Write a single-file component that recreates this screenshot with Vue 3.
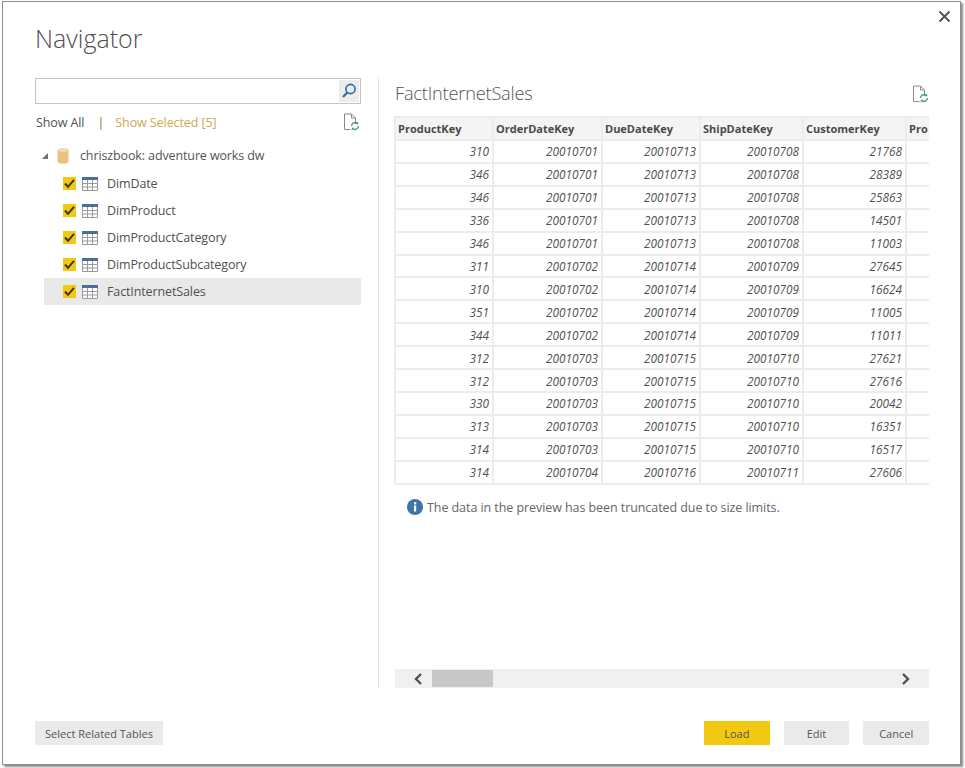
<script setup>
const tables = ['DimDate', 'DimProduct', 'DimProductCategory', 'DimProductSubcategory', 'FactInternetSales']
const columns = [
  { name: 'ProductKey', width: 98 },
  { name: 'OrderDateKey', width: 109 },
  { name: 'DueDateKey', width: 98 },
  { name: 'ShipDateKey', width: 103 },
  { name: 'CustomerKey', width: 103 },
  { name: 'Pro', width: 24 },
]
const rows = [
  [310, 20010701, 20010713, 20010708, 21768],
  [346, 20010701, 20010713, 20010708, 28389],
  [346, 20010701, 20010713, 20010708, 25863],
  [336, 20010701, 20010713, 20010708, 14501],
  [346, 20010701, 20010713, 20010708, 11003],
  [311, 20010702, 20010714, 20010709, 27645],
  [310, 20010702, 20010714, 20010709, 16624],
  [351, 20010702, 20010714, 20010709, 11005],
  [344, 20010702, 20010714, 20010709, 11011],
  [312, 20010703, 20010715, 20010710, 27621],
  [312, 20010703, 20010715, 20010710, 27616],
  [330, 20010703, 20010715, 20010710, 20042],
  [313, 20010703, 20010715, 20010710, 16351],
  [314, 20010703, 20010715, 20010710, 16517],
  [314, 20010704, 20010716, 20010711, 27606],
]
</script>

<template>
  <div class="page">
    <div class="dialog">
      <header class="head">
        <h1 class="title">Navigator</h1>
        <svg class="close" width="13" height="13" viewBox="0 0 13 13" aria-label="Close">
          <path d="M1.5 1.5l10 10M11.5 1.5l-10 10" stroke="#505050" stroke-width="1.8" fill="none" />
        </svg>
      </header>

      <main class="main">
        <section class="left">
          <div class="search">
            <span class="search-btn">
              <svg width="18" height="18" viewBox="0 0 18 18">
                <circle cx="10.5" cy="7" r="4.6" fill="none" stroke="#2f6fb0" stroke-width="1.7" />
                <path d="M7.2 10.4L3 15" stroke="#2f6fb0" stroke-width="2.2" fill="none" />
              </svg>
            </span>
          </div>
          <div class="filter">
            <span class="show-all">Show All</span>
            <span class="sep">|</span>
            <span class="show-selected">Show Selected [5]</span>
            <svg class="refresh left-refresh" width="17" height="18" viewBox="0 0 17 18">
              <path d="M1.5 1h7l4 4v6M1.5 1v15.5h6M8.5 1v4h4" fill="none" stroke="#8a8a8a" stroke-width="1" />
              <path d="M8.5 13a3.5 3.5 0 0 1 6-2.4M15.5 13a3.5 3.5 0 0 1-6 2.4" fill="none" stroke="#3f9c7c" stroke-width="1.3" />
              <path d="M15.2 8.6v2.6h-2.6zM8.8 17.4v-2.6h2.6z" fill="#3f9c7c" />
            </svg>
          </div>
          <div class="tree">
            <div class="root">
              <span class="caret"></span>
              <svg class="db" width="12" height="16" viewBox="0 0 12 16">
                <path d="M0.5 2.5C0.5 1 3 .3 6 .3s5.500.7 5.500 2.200v11c0 1.500-2.500 2.200-5.500 2.200S.5 15 .5 13.500z" fill="#eac27f" />
                <ellipse cx="6" cy="2.500" rx="4.500" ry="1.400" fill="#f3dcb0" />
              </svg>
              <span class="root-name">chriszbook: adventure works dw</span>
            </div>
            <div v-for="t in tables" :key="t" class="item" :class="{ active: t === 'FactInternetSales' }">
              <span class="check">
                <svg width="13" height="13" viewBox="0 0 13 13">
                  <path d="M2 6.500l3 3.300 6-7" fill="none" stroke="#3a3320" stroke-width="2" />
                </svg>
              </span>
              <svg class="tbl" width="16" height="14" viewBox="0 0 16 14">
                <rect x="0" y="0" width="16" height="14" fill="#fff" />
                <rect x="0" y="0" width="16" height="3" fill="#4a6f9c" />
                <path d="M.5 3v10.500h15V3M.5 6.500h15M.5 10h15M5.500 3v10.500M10.500 3v10.500" fill="none" stroke="#9a9a9a" stroke-width="1" />
              </svg>
              <span class="item-name">{{ t }}</span>
            </div>
          </div>
        </section>

        <section class="right">
          <div class="preview-head">
            <h2 class="preview-title">FactInternetSales</h2>
            <svg class="refresh" width="17" height="18" viewBox="0 0 17 18">
              <path d="M1.5 1h7l4 4v6M1.5 1v15.500h6M8.500 1v4h4" fill="none" stroke="#8a8a8a" stroke-width="1" />
              <path d="M8.500 13a3.500 3.500 0 0 1 6-2.400M15.500 13a3.500 3.500 0 0 1-6 2.400" fill="none" stroke="#3f9c7c" stroke-width="1.300" />
              <path d="M15.200 8.600v2.600h-2.600zM8.800 17.400v-2.600h2.600z" fill="#3f9c7c" />
            </svg>
          </div>
          <div class="table-clip">
            <table class="grid">
              <colgroup>
                <col v-for="c in columns" :key="c.name" :style="{ width: c.width + 'px' }" />
              </colgroup>
              <thead>
                <tr><th v-for="c in columns" :key="c.name">{{ c.name }}</th></tr>
              </thead>
              <tbody>
                <tr v-for="(r, i) in rows" :key="i">
                  <td v-for="(v, j) in r" :key="j">{{ v }}</td>
                  <td></td>
                </tr>
              </tbody>
            </table>
          </div>
          <div class="notice">
            <svg width="16" height="16" viewBox="0 0 16 16">
              <circle cx="8" cy="8" r="8" fill="#3f74a8" />
              <rect x="7" y="6.500" width="2.200" height="6" fill="#fff" />
              <rect x="7" y="3.200" width="2.200" height="2.200" fill="#fff" />
            </svg>
            <span>The data in the preview has been truncated due to size limits.</span>
          </div>
          <div class="scrollbar">
            <svg class="arrow-l" width="10" height="12" viewBox="0 0 10 12">
              <path d="M8 1L3 6l5 5" fill="none" stroke="#505050" stroke-width="2.400" />
            </svg>
            <span class="thumb"></span>
            <svg class="arrow-r" width="10" height="12" viewBox="0 0 10 12">
              <path d="M2 1l5 5-5 5" fill="none" stroke="#505050" stroke-width="2.400" />
            </svg>
          </div>
        </section>
      </main>

      <footer class="foot">
        <button class="btn related">Select Related Tables</button>
        <div class="actions">
          <button class="btn primary">Load</button>
          <button class="btn">Edit</button>
          <button class="btn">Cancel</button>
        </div>
      </footer>
    </div>
  </div>
</template>

<style>
html, body { margin: 0; background: #fff; }
</style>

<style scoped>
.page {
  width: 965px;
  height: 768px;
  overflow: hidden;
  box-sizing: border-box;
  padding: 1px 0 0 2px;
  font-family: "Open Sans", "Noto Sans", sans-serif;
  color: #555;
}
.dialog {
  width: 959px;
  height: 764px;
  box-sizing: border-box;
  background: #fff;
  border: 1px solid #8f8f8f;
  box-shadow: 2px 2px 2px #8a8a8a;
  display: flex;
  flex-direction: column;
  padding: 0 31px 19px 32px;
}
.head {
  height: 76px;
  flex: none;
  display: flex;
  justify-content: space-between;
  align-items: flex-start;
}
.title {
  margin: 18px 0 0 0;
  font-size: 25px;
  line-height: 36px;
  font-weight: 300;
  color: #4f4f4f;
}
.close { margin: 8px -22px 0 0; }
.main {
  flex: 1;
  display: flex;
  min-height: 0;
  height: 610px;
}
.left {
  width: 326px;
  flex: none;
  display: flex;
  flex-direction: column;
  padding-right: 17px;
  border-right: 1px solid #e4e4e4;
  height: 610px;
}
.search {
  height: 26px;
  box-sizing: border-box;
  border: 1px solid #c4c4c4;
  display: flex;
  justify-content: flex-end;
  padding: 1px;
}
.search-btn {
  width: 20px;
  background: #ececec;
  display: flex;
  align-items: center;
  justify-content: center;
}
.filter {
  display: flex;
  align-items: center;
  height: 24px;
  margin-top: 6px;
  font-size: 12.500px;
}
.show-all { color: #505050; letter-spacing: -0.100px; margin-left: 1px; }
.sep { margin: 0 11px 0 13px; color: #8a6d2f; }
.show-selected { color: #cfa94f; letter-spacing: -0.080px; }
.refresh { flex: none; }
.left-refresh { margin-left: auto; margin-right: 1px; }
.tree { margin-top: 7px; }
.root {
  display: flex;
  align-items: center;
  height: 29px;
  padding-left: 7px;
  font-size: 12.500px;
  letter-spacing: -0.120px;
  color: #555;
}
.caret {
  width: 0;
  height: 0;
  border-style: solid;
  border-width: 0 0 6px 6px;
  border-color: transparent transparent #707070 transparent;
  margin-right: 9px;
}
.db { margin-right: 11px; }
.item {
  display: flex;
  align-items: center;
  height: 27px;
  margin-left: 9px;
  padding-left: 19px;
  font-size: 12.500px;
  letter-spacing: -0.120px;
  color: #505050;
}
.item.active { background: #e9e9e9; }
.check {
  width: 13px;
  height: 13px;
  background: #f2c811;
  display: flex;
  margin-right: 6px;
}
.tbl { margin-right: 9px; }
.right {
  flex: 1;
  min-width: 0;
  padding-left: 16px;
  display: flex;
  flex-direction: column;
  height: 610px;
}
.preview-head {
  height: 38px;
  flex: none;
  display: flex;
  justify-content: space-between;
  align-items: flex-start;
}
.preview-title {
  margin: 2px 0 0;
  font-size: 18.200px;
  line-height: 26px;
  font-weight: 300;
  color: #555;
  letter-spacing: -0.200px;
}
.preview-head .refresh { margin: 7px 0 0 0; }
.table-clip { width: 535px; margin-left: -1px; overflow: hidden; flex: none; }
.grid {
  border-collapse: collapse;
  table-layout: fixed;
  width: 535px;
  font-size: 11.800px;
}
th, td {
  border: 2px solid #ececec;
  padding: 0 3px 0 2px;
  white-space: nowrap;
  overflow: hidden;
}
th {
  height: 21px;
  background: #f4f4f4;
  text-align: left;
  font-weight: 700;
  font-size: 11px;
  color: #4a4a4a;
}
td {
  height: 20.910px;
  text-align: right;
  font-style: italic;
  color: #505050;
}
.notice {
  display: flex;
  align-items: center;
  gap: 4px;
  margin-top: 14px;
  padding-left: 12px;
  font-size: 12.500px;
  letter-spacing: -0.070px;
  color: #666;
}
.scrollbar {
  margin-top: auto;
  height: 19px;
  flex: none;
  background: #f0f0f0;
  display: flex;
  align-items: center;
}
.arrow-l { margin-left: 18px; }
.thumb { width: 61px; height: 17px; background: #c8c8c8; margin-left: 9px; }
.arrow-r { margin-left: auto; margin-right: 18px; }
.foot {
  flex: none;
  margin-top: 33px;
  display: flex;
  justify-content: space-between;
}
.actions { display: flex; gap: 14px; }
.btn {
  height: 24px;
  width: 65.670px;
  border: none;
  padding: 0;
  background: #eaeaea;
  font-family: inherit;
  font-size: 11px;
  color: #555;
}
.related { width: 128px; }
.primary { background: #f2c811; }
</style>
